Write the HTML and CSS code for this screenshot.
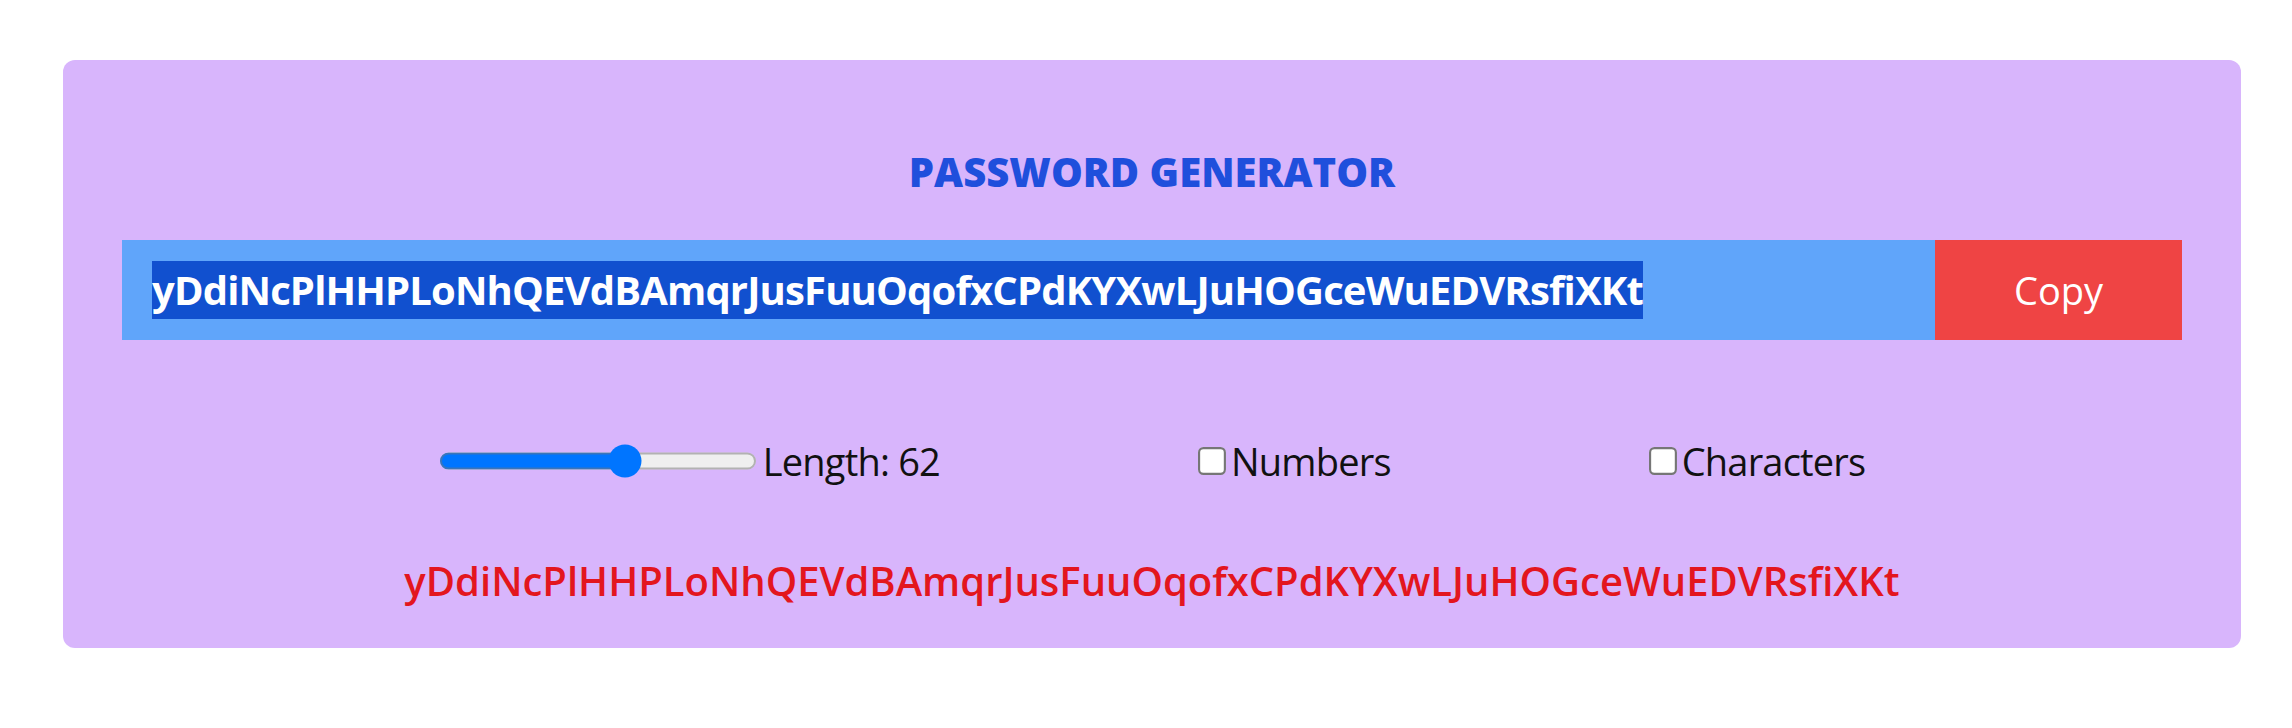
FILE: index.html
```html
<!DOCTYPE html>
<html lang="en">
<head>
<meta charset="utf-8">
<title>Password Generator</title>
<link rel="stylesheet" href="styles.css">
</head>
<body>
<main class="card">
  <h1 class="title">PASSWORD GENERATOR</h1>
  <div class="field-row">
    <div class="field"><span class="field-sel">yDdiNcPlHHPLoNhQEVdBAmqrJusFuuOqofxCPdKYXwLJuHOGceWuEDVRsfiXKt</span></div>
    <button class="copy-btn" type="button">Copy</button>
  </div>
  <div class="controls">
    <label class="ctrl">
      <input class="range" type="range" min="6" max="100" value="62">
      <span class="ctrl-text">Length: 62</span>
    </label>
    <label class="ctrl ctrl-check">
      <input class="check" type="checkbox">
      <span class="ctrl-text">Numbers</span>
    </label>
    <label class="ctrl ctrl-check">
      <input class="check" type="checkbox">
      <span class="ctrl-text">Characters</span>
    </label>
  </div>
  <p class="result">yDdiNcPlHHPLoNhQEVdBAmqrJusFuuOqofxCPdKYXwLJuHOGceWuEDVRsfiXKt</p>
</main>
</body>
</html>
```
FILE: styles.css
```css
* { box-sizing: border-box; }

html, body {
  margin: 0;
  padding: 0;
  background: #ffffff;
}

body {
  font-family: "Open Sans", "Noto Sans", Arial, sans-serif;
  padding: 60px 51px 0 63px;
}

.card {
  background: #d8b5fc;
  border-radius: 12px;
  padding: 92px 59px 42px 59px;
  display: flex;
  flex-direction: column;
}

.title {
  margin: 0;
  text-align: center;
  font-size: 40px;
  line-height: 40px;
  font-weight: 800;
  color: #1f4fdc;
  letter-spacing: 0;
}

.field-row {
  margin-top: 48px;
  display: flex;
  height: 100px;
}

.field {
  flex: 1;
  background: #60a5fa;
  display: flex;
  align-items: center;
  padding: 0 30px;
  overflow: hidden;
}

.field-sel {
  display: inline-block;
  background: #1150cf;
  color: #ffffff;
  font-size: 40px;
  font-weight: 700;
  line-height: 58px;
  letter-spacing: -0.85px;
  white-space: nowrap;
}

.copy-btn {
  width: 247px;
  border: 0;
  margin: 0;
  padding: 0;
  background: #ef4444;
  color: #ffffff;
  font-family: "Open Sans", "Noto Sans", Arial, sans-serif;
  font-size: 38px;
  font-weight: 400;
}

.controls {
  margin-top: 91px;
  height: 60px;
  display: flex;
  justify-content: center;
  align-items: center;
  gap: 258px;
}

.ctrl {
  display: flex;
  align-items: center;
  gap: 6px;
}

.ctrl-check { gap: 5px; }

.ctrl-text {
  font-size: 38px;
  line-height: 50px;
  color: #111111;
  letter-spacing: -0.8px;
}

.range {
  zoom: 2.15;
  width: 148px;
  margin: 0;
}

.check {
  zoom: 2.15;
  margin: 0;
}

.result {
  margin: 65px 0 0 0;
  text-align: center;
  font-size: 40px;
  line-height: 50px;
  font-weight: 600;
  color: #e3161e;
  letter-spacing: 0;
}
```
